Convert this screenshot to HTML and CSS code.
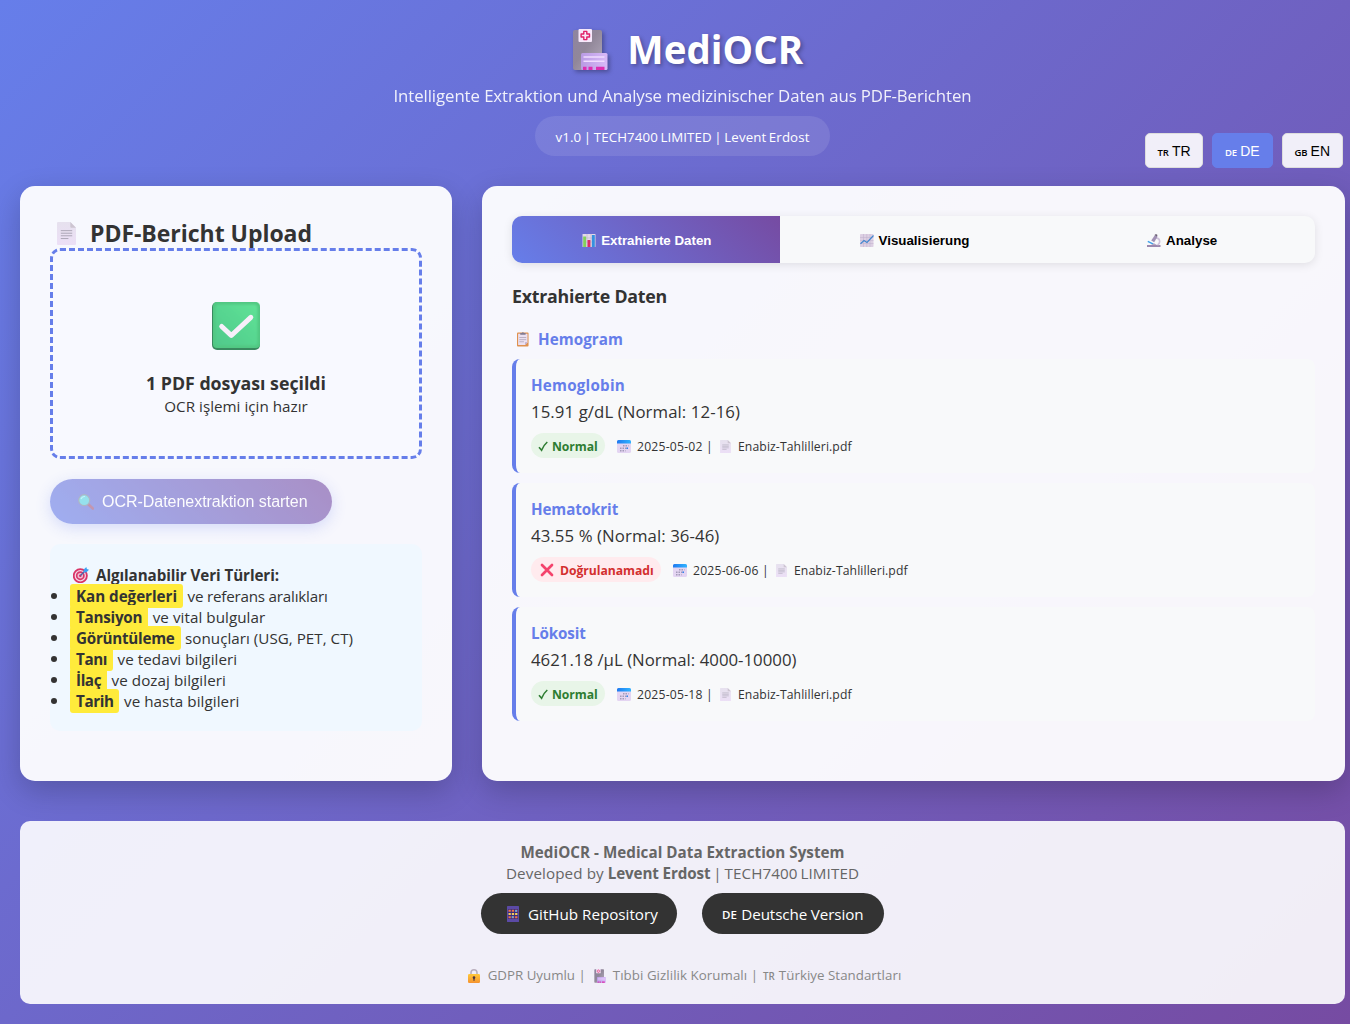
FILE: index.html
```html
<!DOCTYPE html>
<html lang="de">
<head>
<meta charset="utf-8">
<title>MediOCR</title>
<link rel="stylesheet" href="styles.css">
</head>
<body>
<svg class="sprite" aria-hidden="true">
  <defs>
    <linearGradient id="gBuilding" x1="0" y1="0" x2="1" y2="1"><stop offset="0" stop-color="#8e84a0"/><stop offset=".45" stop-color="#918799"/><stop offset="1" stop-color="#b5acbd"/></linearGradient>
    <linearGradient id="gWing" x1="0" y1="0" x2="1" y2="0"><stop offset="0" stop-color="#b99be4"/><stop offset="1" stop-color="#d8b9f8"/></linearGradient>
    <linearGradient id="gPage" x1="0" y1="0" x2="0" y2="1"><stop offset="0" stop-color="#e6e1ee"/><stop offset="1" stop-color="#ecdff6"/></linearGradient>
    <linearGradient id="gCheck" x1="0" y1="1" x2="1" y2="0"><stop offset="0" stop-color="#50c98b"/><stop offset="1" stop-color="#5fe296"/></linearGradient>
    <linearGradient id="gCal" x1="0" y1="0" x2="1" y2="0"><stop offset="0" stop-color="#1f7af0"/><stop offset="1" stop-color="#30b4ff"/></linearGradient>
    <linearGradient id="gLock" x1="0" y1="0" x2="0" y2="1"><stop offset="0" stop-color="#ffc83a"/><stop offset="1" stop-color="#f59330"/></linearGradient>
    <filter id="soft"><feGaussianBlur stdDeviation="1.3"/></filter>
  </defs>
  <symbol id="hospital" viewBox="0 0 36 42">
    <rect x="1" y="1" width="29" height="40" rx="2" fill="url(#gBuilding)"/>
    <rect x="6.5" y="0" width="13.5" height="13" rx="1" fill="#f6e8fb"/>
    <path d="M11.8 2.4h3v2.6h2.7v3h-2.7v2.6h-3V8H9.100V5h2.700z" fill="none" stroke="#e0206a" stroke-width="1.4" stroke-linejoin="round"/>
    <rect x="9" y="24" width="26.5" height="17" rx="1.5" fill="url(#gWing)"/>
    <path d="M11.5 28h21M11.5 32.3h21" stroke="#f0dcff" stroke-width="1.5"/>
    <path d="M11 41v-3.300h3.500V41zM16.500 41v-3.300h4V41zM24 41v-3.300h8.500V41z" fill="#dc2fb0"/>
  </symbol>
  <symbol id="page" viewBox="0 0 20 24">
    <path d="M1 0h13l6 6v17a1 1 0 0 1-1 1H1a1 1 0 0 1-1-1V1a1 1 0 0 1 1-1z" fill="url(#gPage)"/>
    <path d="M14 0l6 6h-5a1 1 0 0 1-1-1z" fill="#cdc5d1"/>
    <path d="M4 9h12M4 11.7h12M4 14.4h12M4 17.3h8" stroke="#aaa3b4" stroke-width="1"/>
  </symbol>
  <symbol id="check" viewBox="0 0 48 48">
    <rect width="48" height="48" rx="5" fill="#39895f"/>
    <rect x="1" width="47" height="46" rx="4" fill="#63f09a" opacity=".6"/>
    <rect x="3.5" y="2.5" width="42" height="41" rx="3" fill="url(#gCheck)" filter="url(#soft)"/>
    <path d="M9.7 24.5L19.3 33.5 38.8 15.300" fill="none" stroke="#f7effa" stroke-width="5" stroke-linecap="round" stroke-linejoin="round"/>
  </symbol>
  <symbol id="magnifier" viewBox="0 0 16 16">
    <path d="M10 10l4.800 4.500" stroke="#a1567e" stroke-width="2.6" stroke-linecap="round"/>
    <circle cx="6.2" cy="6.2" r="5.5" fill="#57d2e3" stroke="#7e8c9f" stroke-width="1.2"/>
    <path d="M3 5a4 4 0 0 1 4-2.500" fill="none" stroke="#a5f2f5" stroke-width="1.2"/>
  </symbol>
  <symbol id="target" viewBox="0 0 16 16">
    <circle cx="7.3" cy="8.7" r="6.6" fill="#f3d5e5" stroke="#d93467" stroke-width="1.8"/>
    <circle cx="7.3" cy="8.7" r="3.6" fill="#f0bdd3" stroke="#d9386b" stroke-width="1.7"/>
    <circle cx="7.3" cy="8.7" r="1.2" fill="#c92e68"/>
    <path d="M7.5 8.5L12 4" stroke="#4267a8" stroke-width="1.3"/>
    <path d="M10.5 5.5l.2-3L13.3 0l.6 2.100 2.100.6-2.500 2.600z" fill="#3da1f3"/>
  </symbol>
  <symbol id="bars" viewBox="0 0 13 13">
    <rect width="13" height="13" rx=".5" fill="#e2d8e9"/>
    <path d="M0 4h13M0 8h13M4.500 0v13M8.500 0v13" stroke="#b8adc0" stroke-width=".5"/>
    <rect x=".7" y="2.5" width="2.9" height="10.5" fill="#82d05c"/>
    <rect x="5" y="6" width="2.9" height="7" fill="#dd2968"/>
    <rect x="9.4" y="1" width="2.9" height="12" fill="#3591df"/>
  </symbol>
  <symbol id="trend" viewBox="0 0 14 13">
    <rect width="13.5" height="13" rx=".7" fill="#ddd0e3"/>
    <path d="M0 3.500h13.500M0 6.500h13.500M0 9.500h13.500M3.500 0v13M6.800 0v13M10 0v13" stroke="#bfb0cc" stroke-width=".5"/>
    <path d="M.5 9.800L4 6.500l3 2L13.500 1.500" fill="none" stroke="#4387cf" stroke-width="1.2"/>
  </symbol>
  <symbol id="microscope" viewBox="0 0 14 13">
    <path d="M0 11h13.500v2H0z" fill="#9b89ae"/>
    <path d="M9 4.200c4-.4 5 4.800 1.500 6.800" fill="none" stroke="#cfc2da" stroke-width="1.6"/>
    <path d="M4.200 6.500L8 1l2.600 1.500-3.400 5.800z" fill="#a191b5"/>
    <path d="M7.500 1L9 0l1.500 1-.6 1.500z" fill="#6c6275"/>
    <path d="M.8 7.300l5.500 2.900" stroke="#3fa2e9" stroke-width="1.5"/>
    <path d="M4 11l3-1.800 3 1.800z" fill="#b4a5c2"/>
  </symbol>
  <symbol id="clipboard" viewBox="0 0 13 16">
    <rect x="0" y="1" width="12.5" height="15" rx="1" fill="#df914f"/>
    <path d="M1.200 2.300h10.200v9.200L8.800 14.600H1.200z" fill="#ebe0f1"/>
    <path d="M11.400 11.500H8.800v3.100z" fill="#bba9c9"/>
    <path d="M3.500 3.500v-2h1.700a1.200 1.200 0 0 1 2.300 0h1.800v2z" fill="#827b91"/>
    <path d="M2.500 6.400h7.500M2.500 8.700h7.500M2.500 11h5" stroke="#aaa0b5" stroke-width=".8"/>
  </symbol>
  <symbol id="calendar" viewBox="0 0 14 13">
    <rect width="14" height="13" rx="1.6" fill="#e4d5f2"/>
    <path d="M1.500 0h11A1.500 1.500 0 0 1 14 1.500V3.500H0V1.500A1.500 1.500 0 0 1 1.500 0z" fill="url(#gCal)"/>
    <path d="M6 5.800h5.500M3 8.300h8M3 10.800h5.500" stroke="#a39bb8" stroke-width="1.400" stroke-dasharray="1.500 1"/>
    <path d="M9.500 7.600H11V9H9.500z" fill="#3284ee"/>
  </symbol>
  <symbol id="cross" viewBox="0 0 14 14">
    <path d="M2 2l10 10M12 2L2 12" stroke="#f4436c" stroke-width="2.7" stroke-linecap="round"/>
  </symbol>
  <symbol id="tick" viewBox="0 0 10 11">
    <path d="M1 6.200L3.600 9.300C5 6 6.500 3.300 9.300 1" fill="none" stroke="#2e7d32" stroke-width="1.6"/>
  </symbol>
  <symbol id="abacus" viewBox="0 0 12 16">
    <rect width="12" height="16" rx=".6" fill="#5b4aa6"/>
    <rect x="1" y="3" width="10" height="10" fill="#392f7c"/>
    <path d="M1.500 4.800h9M1.500 11.200h9" stroke="#f2724b" stroke-width="2" stroke-dasharray="2.300 1"/>
    <path d="M1.500 8h9" stroke="#f6c95a" stroke-width="2" stroke-dasharray="2.300 1"/>
    <path d="M8.200 4H10v1.700H8.200zM4.800 10.300h1.700V12H4.800z" fill="#5aa9ec"/>
  </symbol>
  <symbol id="lock" viewBox="0 0 12 14">
    <path d="M3 6.500V3.800a3 3 0 0 1 6 0v2.700" fill="none" stroke="#b9afbd" stroke-width="1.6"/>
    <rect y="5" width="12" height="9" rx="1.2" fill="url(#gLock)"/>
    <circle cx="6" cy="8.6" r="1.3" fill="#4a3440"/><path d="M5.400 9h1.200v2.800H5.400z" fill="#4a3440"/>
  </symbol>
</svg>

<div class="page">
  <header class="header">
    <h1 class="brand"><svg class="brand-icon"><use href="#hospital"/></svg><span>MediOCR</span></h1>
    <p class="tagline">Intelligente Extraktion und Analyse medizinischer Daten aus PDF-Berichten</p>
    <div class="version">v1.0 | TECH7400 LIMITED | Levent Erdost</div>
  </header>

  <nav class="languages">
    <button class="lang"><small>TR</small>TR</button>
    <button class="lang active"><small>DE</small>DE</button>
    <button class="lang"><small>GB</small>EN</button>
  </nav>

  <main class="columns">
    <section class="panel upload">
      <h2 class="upload-title"><svg class="upload-icon"><use href="#page"/></svg><span>PDF-Bericht Upload</span></h2>
      <div class="dropzone">
        <svg class="drop-icon"><use href="#check"/></svg>
        <h3 class="drop-title">1 PDF dosyası seçildi</h3>
        <p class="drop-text">OCR işlemi için hazır</p>
      </div>
      <button class="start"><svg class="start-icon"><use href="#magnifier"/></svg><span>OCR-Datenextraktion starten</span></button>
      <div class="types">
        <h4 class="types-title"><svg class="types-icon"><use href="#target"/></svg><span>Algılanabilir Veri Türleri:</span></h4>
        <ul class="types-list">
          <li><mark>Kan değerleri</mark><span>ve referans aralıkları</span></li>
          <li><mark>Tansiyon</mark><span>ve vital bulgular</span></li>
          <li><mark>Görüntüleme</mark><span>sonuçları (USG, PET, CT)</span></li>
          <li><mark>Tanı</mark><span>ve tedavi bilgileri</span></li>
          <li><mark>İlaç</mark><span>ve dozaj bilgileri</span></li>
          <li><mark>Tarih</mark><span>ve hasta bilgileri</span></li>
        </ul>
      </div>
    </section>

    <section class="panel results">
      <div class="tabs">
        <button class="tab active"><svg class="tab-icon"><use href="#bars"/></svg><span>Extrahierte Daten</span></button>
        <button class="tab"><svg class="tab-icon"><use href="#trend"/></svg><span>Visualisierung</span></button>
        <button class="tab"><svg class="tab-icon"><use href="#microscope"/></svg><span>Analyse</span></button>
      </div>
      <h3 class="results-title">Extrahierte Daten</h3>
      <h4 class="group-title"><svg class="group-icon"><use href="#clipboard"/></svg><span>Hemogram</span></h4>
      <article class="value-card">
        <h5 class="value-name wide">Hemoglobin</h5>
        <p class="value-text">15.91 g/dL (Normal: 12-16)</p>
        <div class="meta"><span class="badge ok"><svg class="tick-icon"><use href="#tick"/></svg><span>Normal</span></span><svg class="cal-icon"><use href="#calendar"/></svg><span class="date">2025-05-02 |</span><svg class="file-icon"><use href="#page"/></svg><span class="file">Enabiz-Tahlilleri.pdf</span></div>
      </article>
      <article class="value-card">
        <h5 class="value-name">Hematokrit</h5>
        <p class="value-text">43.55 % (Normal: 36-46)</p>
        <div class="meta"><span class="badge bad"><svg class="cross-icon"><use href="#cross"/></svg><span>Doğrulanamadı</span></span><svg class="cal-icon"><use href="#calendar"/></svg><span class="date">2025-06-06 |</span><svg class="file-icon"><use href="#page"/></svg><span class="file">Enabiz-Tahlilleri.pdf</span></div>
      </article>
      <article class="value-card">
        <h5 class="value-name">Lökosit</h5>
        <p class="value-text long">4621.18 /µL (Normal: 4000-10000)</p>
        <div class="meta"><span class="badge ok"><svg class="tick-icon"><use href="#tick"/></svg><span>Normal</span></span><svg class="cal-icon"><use href="#calendar"/></svg><span class="date">2025-05-18 |</span><svg class="file-icon"><use href="#page"/></svg><span class="file">Enabiz-Tahlilleri.pdf</span></div>
      </article>
    </section>
  </main>

  <footer class="footer">
    <p class="product"><strong>MediOCR - Medical Data Extraction System</strong></p>
    <p class="credit">Developed by <strong>Levent Erdost</strong><span class="company"> | TECH7400 LIMITED</span></p>
    <div class="links">
      <a class="link"><svg class="abacus-icon"><use href="#abacus"/></svg><span>GitHub Repository</span></a>
      <a class="link german"><small>DE</small><span>Deutsche Version</span></a>
    </div>
    <p class="legal"><svg class="lock-icon"><use href="#lock"/></svg><span>GDPR Uyumlu |</span><svg class="clinic-icon"><use href="#hospital"/></svg><span class="privacy">Tıbbi Gizlilik Korumalı |</span><small>TR</small><span class="standards">Türkiye Standartları</span></p>
  </footer>
</div>
</body>
</html>
```
FILE: styles.css
```css
* { box-sizing: border-box; margin: 0; padding: 0; }

body {
  min-height: 1024px;
  background: linear-gradient(135deg, #667eea 0%, #764ba2 100%);
  color: #333;
  font-family: "Open Sans", "Noto Sans", sans-serif;
  font-size: 15.2px;
  line-height: 21px;
}

svg { display: block; flex: none; }
.sprite { position: absolute; width: 0; height: 0; }
button { border: 0; font-family: "Liberation Sans", Arial, sans-serif; }
p, h3, h5, span, strong { white-space: nowrap; }
small { font-family: "Open Sans", sans-serif; font-weight: 600; letter-spacing: 0; }

.page { position: relative; padding: 20px 5px 20px 20px; }

/* Header */
.header { display: flex; flex-direction: column; align-items: center; height: 166px; color: #fff; }
.brand { display: flex; align-items: center; gap: 19.5px; height: 58px; padding-left: 10px; font-size: 38.5px; letter-spacing: 0; line-height: 57px; text-shadow: 2px 2px 4px rgba(0, 0, 0, .3); }
.brand-icon { width: 36px; height: 42px; margin-top: 1px; filter: drop-shadow(2px 2px 2px rgba(0, 0, 0, .3)); }
.tagline { height: 38px; font-size: 16.8px; letter-spacing: -.081px; line-height: 36px; opacity: .9; }
.version { width: 295px; height: 40px; border-radius: 20px; background: rgba(255, 255, 255, .1); font-size: 13.3px; letter-spacing: .1px; line-height: 42px; text-align: center; white-space: nowrap; word-spacing: -1px; }

.languages { position: absolute; top: 133px; right: 7px; display: flex; gap: 8.5px; }
.lang { display: flex; align-items: baseline; justify-content: center; gap: 3px; width: 61.5px; height: 35px; border: 1px solid #ddd; border-radius: 5px; background: rgba(255, 255, 255, .9); color: #000; font-size: 14px; line-height: 34px; }
.lang:first-child { width: 58px; }
.lang small { font-size: 9.5px; }
.lang.active { border-color: #667eea; background: #667eea; color: #fff; }

/* Panels */
.columns { display: grid; grid-template-columns: 432px 1fr; gap: 30px; height: 595px; }
.panel { padding: 30px; border-radius: 15px; background: rgba(255, 255, 255, .95); box-shadow: 0 10px 30px rgba(0, 0, 0, .2); }

/* Upload column */
.upload-title { display: flex; align-items: center; gap: 14px; height: 32px; padding-left: 7px; font-size: 23px; letter-spacing: -.03px; line-height: 36px; }
.upload-title span { padding-top: 2px; }
.upload-icon { width: 19px; height: 23px; margin-top: 2px; }
.dropzone { display: flex; flex-direction: column; align-items: center; height: 211px; padding-top: 51px; border: 3px dashed #667eea; border-radius: 10px; background: #f8f9ff; }
.drop-icon { width: 48px; height: 48px; margin-bottom: 21px; }
.drop-title { font-size: 17.8px; letter-spacing: -.017px; line-height: 25px; }
.drop-text { letter-spacing: .019px; line-height: 20px; }
.start { display: flex; align-items: center; gap: 8px; width: 282px; height: 45px; margin-top: 20px; padding-left: 28px; border-radius: 25px; background: linear-gradient(45deg, #667eea, #764ba2); box-shadow: 0 4px 15px rgba(102, 126, 234, .4); color: #fff; font-size: 16px; letter-spacing: -.03px; opacity: .6; }
.start span { padding-top: 1px; }
.start-icon { width: 16px; height: 16px; }
.types { height: 187px; margin-top: 20px; padding: 20px; border-radius: 10px; background: #f0f8ff; }
.types-title { display: flex; align-items: center; gap: 7px; height: 21px; padding-left: 3px; letter-spacing: -.079px; }
.types-title span { padding-top: 2px; }
.types-icon { width: 16px; height: 16px; }
.types-list li { height: 21px; line-height: 22px; }
.types-list li::marker { font-size: 17px; }
.types-list span { letter-spacing: .06px; }
.types-list mark { margin-right: 4.5px; padding: 2px 6px; border-radius: 3px; background: #ffeb3b; color: #333; font-weight: 700; letter-spacing: -.25px; }
.types-list li:nth-child(1) mark { letter-spacing: -.028px; }
.types-list li:nth-child(1) span { letter-spacing: -.21px; }
.types-list li:nth-child(3) span { letter-spacing: .018px; }
.types-list li:nth-child(n+4) mark { letter-spacing: -.4px; }

/* Results column */
.tabs { display: grid; grid-template-columns: repeat(3, 1fr); height: 47px; overflow: hidden; border-radius: 10px; background: #f8f9fa; box-shadow: 0 2px 10px rgba(0, 0, 0, .1); }
.tab { display: flex; align-items: center; justify-content: center; gap: 5px; padding: 2px 0 0 2px; background: transparent; color: #000; font-size: 13.33px; font-weight: 700; line-height: 45px; }
.tab.active { background: linear-gradient(45deg, #667eea, #764ba2); color: #fff; }
.tab-icon { width: 14px; height: 13px; }
.results-title { margin-top: 20px; font-size: 17.8px; letter-spacing: -.243px; line-height: 27px; }
.group-title { display: flex; align-items: center; gap: 9px; height: 21px; margin: 18px 0 10px; padding-left: 5px; color: #667eea; letter-spacing: .064px; line-height: 22px; }
.group-icon { width: 12px; height: 16px; }
.value-card { height: 114px; margin-bottom: 10px; padding: 15px; border-left: 4px solid #667eea; border-radius: 8px; background: #f8f9fa; }
.value-name { height: 21px; color: #667eea; font-size: 15.2px; letter-spacing: -.11px; line-height: 23px; }
.value-name.wide { letter-spacing: .223px; }
.value-text { height: 33px; padding-top: 5px; font-size: 16.8px; letter-spacing: .08px; line-height: 24px; }
.value-text.long { letter-spacing: .013px; }
.meta { display: flex; align-items: center; height: 25px; margin-top: 5px; font-size: 12.2px; line-height: 27px; }
.badge { display: flex; align-items: center; height: 25px; margin-right: 12px; border-radius: 15px; font-weight: 700; letter-spacing: -.05px; }
.badge.ok { gap: 4px; width: 74px; padding-left: 7px; background: #e8f5e8; color: #2e7d32; }
.badge.bad { gap: 6px; width: 130px; padding-left: 9px; background: #ffebee; color: #d32f2f; }
.badge span, .date, .file { padding-top: 1px; }
.tick-icon { width: 10px; height: 11px; margin-top: 1px; }
.cross-icon { width: 14px; height: 14px; margin-top: 1px; }
.cal-icon { width: 14px; height: 13px; margin: 1px 6px 0 0; }
.date { margin-right: 7px; letter-spacing: .212px; }
.file-icon { width: 11px; height: 13px; margin: 1px 7px 0 0; }
.file { letter-spacing: .1px; }

/* Footer */
.footer { display: flex; flex-direction: column; align-items: center; height: 183px; margin-top: 40px; padding-top: 21px; border-radius: 10px; background: rgba(255, 255, 255, .9); color: #666; }
.product { letter-spacing: .033px; }
.credit { letter-spacing: .1px; }
.credit strong { letter-spacing: -.13px; }
.company { white-space: pre; word-spacing: -1.2px; }
.links { display: flex; gap: 25px; margin-top: 9px; }
.link { display: flex; align-items: center; width: 196px; height: 41px; padding-left: 20px; border-radius: 25px; background: #333; color: #fff; line-height: 41px; }
.link span, .link small { padding-top: 1px; }
.link.german { width: 182px; letter-spacing: -.118px; }
.link small { margin-right: 4.5px; font-size: 11.5px; }
.abacus-icon { width: 12px; height: 16px; margin: 0 9px 0 6px; }
.legal { display: flex; align-items: center; height: 21px; margin-top: 31px; padding-left: 4px; color: #888; font-size: 13.3px; }
.lock-icon { width: 12px; height: 14px; margin-right: 8px; }
.clinic-icon { width: 12px; height: 14px; margin: 0 7px 0 8px; }
.privacy { letter-spacing: .06px; }
.standards { letter-spacing: .04px; }
.legal small { margin: 1px 4px 0 5px; font-size: 9.8px; }
```
